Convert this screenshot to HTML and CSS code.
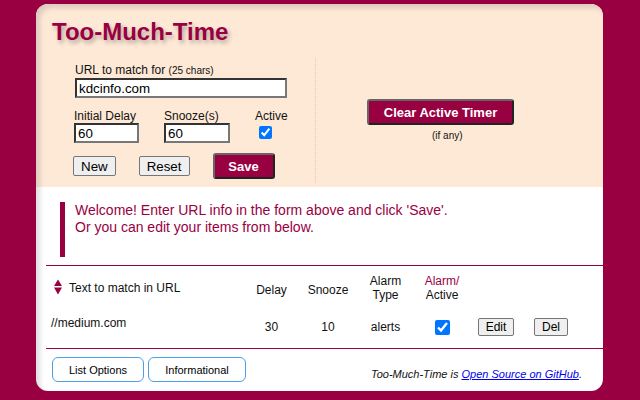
FILE: index.html
```
<!DOCTYPE html>
<html lang="en">
<head>
<meta charset="utf-8">
<title>Too-Much-Time</title>
<link rel="stylesheet" href="styles.css">
</head>
<body>
<div class="card">
  <section class="top">
    <h1 class="title">Too-Much-Time</h1>
    <div class="top-row">
      <form class="form-col">
        <label class="url-group">
          <span class="lbl">URL to match for <small>(25 chars)</small></span>
          <input class="inp url" type="text" value="kdcinfo.com">
        </label>
        <div class="row2">
          <label class="grp"><span class="lbl">Initial Delay</span><input class="inp num" type="text" value="60"></label>
          <label class="grp"><span class="lbl">Snooze(s)</span><input class="inp num snz" type="text" value="60"></label>
          <label class="grp"><span class="lbl">Active</span><input class="chk" type="checkbox" checked></label>
        </div>
        <div class="btns">
          <button type="button" class="btn">New</button>
          <button type="button" class="btn">Reset</button>
          <button type="button" class="btn-primary save">Save</button>
        </div>
      </form>
      <div class="clear-col">
        <button type="button" class="btn-primary clear">Clear Active Timer</button>
        <div class="note">(if any)</div>
      </div>
    </div>
  </section>
  <section class="bottom">
    <div class="welcome">
      Welcome! Enter URL info in the form above and click 'Save'.<br>
      Or you can edit your items from below.
    </div>
    <div class="rule"></div>
    <div class="grid head">
      <div class="c1 hc1">
        <svg class="sort" width="8" height="16" viewBox="0 0 8 16"><polygon points="4,0.5 8,7 0,7" fill="#990042"/><polygon points="0,8.5 8,8.5 4,15.5" fill="#990042"/></svg>
        <span>Text to match in URL</span>
      </div>
      <div class="low">Delay</div>
      <div class="low">Snooze</div>
      <div>Alarm<br>Type</div>
      <div><span class="accent">Alarm/</span><br>Active</div>
      <div></div>
      <div></div>
    </div>
    <div class="grid row">
      <div class="c1 url-cell">//medium.com</div>
      <div>30</div>
      <div>10</div>
      <div>alerts</div>
      <div class="cc"><input class="chk2" type="checkbox" checked></div>
      <div class="cc"><button type="button" class="sbtn">Edit</button></div>
      <div class="cc"><button type="button" class="sbtn">Del</button></div>
    </div>
    <div class="rule tight"></div>
    <div class="footer">
      <button type="button" class="obtn w1">List Options</button>
      <button type="button" class="obtn w2">Informational</button>
      <p class="credit">Too-Much-Time is <a href="#">Open Source on GitHub</a>.</p>
    </div>
  </section>
</div>
</body>
</html>
```

FILE: styles.css
```
html, body {
  margin: 0;
  padding: 0;
}
body {
  background: #990042;
  font-family: "Liberation Sans", Arial, sans-serif;
  color: #111;
  width: 640px;
  height: 400px;
  overflow: hidden;
}
.card {
  position: relative;
  margin: 4px 0 0 36px;
  width: 567px;
  height: 387px;
  border-radius: 12px;
  overflow: hidden;
  background: #fff;
}
.card::after {
  content: "";
  position: absolute;
  inset: 0;
  border-radius: 12px;
  box-shadow: inset 4px 4px 5px rgba(0, 0, 0, 0.13);
  pointer-events: none;
}
.top {
  background: #fee9d7;
  box-sizing: border-box;
  height: 183px;
  padding: 14px 0 4px 16px;
}
.title {
  margin: 0 0 12px;
  font-size: 24px;
  line-height: 28px;
  font-weight: bold;
  color: #990042;
  text-shadow: 2px 3px 4px rgba(0, 0, 0, 0.3);
}
.top-row {
  display: flex;
  height: 125px;
}
.form-col {
  margin: 0 0 0 22px;
  width: 242px;
  box-sizing: border-box;
  padding-top: 5px;
  border-right: 1px dotted #f3c7a6;
}
.url-group {
  display: block;
  padding-left: 1px;
}
.lbl {
  display: block;
  font-size: 12px;
  line-height: 14px;
  color: #111;
}
.lbl small {
  font-size: 10px;
}
.inp {
  display: block;
  margin: 0;
  box-sizing: border-box;
  height: 20px;
  padding: 1px 2px;
  font-family: "Liberation Sans", Arial, sans-serif;
  font-size: 13.333px;
  color: #000;
  background: #fff;
  border: 2px solid;
  border-color: #333 #777 #777 #333;
  outline: none;
}
.url {
  width: 212px;
}
.num {
  width: 65px;
}
.snz {
  width: 66px;
}
.row2 {
  display: grid;
  grid-template-columns: 90px 91px auto;
  margin-top: 11px;
}
.chk {
  display: block;
  margin: 3px 0 0 4px;
  width: 13px;
  height: 13px;
}
.btns {
  display: flex;
  align-items: center;
  gap: 23px;
  margin: 10px 0 0 -1px;
}
.btn {
  height: 20px;
  padding: 0 7px;
  font-family: "Liberation Sans", Arial, sans-serif;
  font-size: 13.333px;
  color: #000;
  background: #efefef;
  border: 1px solid #767676;
  border-radius: 2px;
}
.btn-primary {
  height: 26px;
  padding: 0;
  font-family: "Liberation Sans", Arial, sans-serif;
  font-size: 13px;
  font-weight: bold;
  color: #fff;
  background: #990042;
  border: 2px solid;
  border-color: #666 #222 #222 #666;
  border-radius: 3px;
}
.save {
  width: 62px;
}
.clear {
  width: 147px;
}
.clear-col {
  display: flex;
  flex-direction: column;
  align-items: flex-start;
  padding: 41px 0 0 51px;
}
.note {
  font-size: 10px;
  line-height: 12px;
  margin: 5px 0 0 65px;
  color: #111;
}
.bottom {
  padding-left: 10px;
}
.welcome {
  margin: 15px 0 0 14px;
  border-left: 5px solid #990042;
  padding: 0 0 21px 10px;
  font-size: 14px;
  line-height: 17px;
  color: #990042;
}
.rule {
  height: 1px;
  background: #990042;
  margin-top: 8px;
}
.rule.tight {
  margin-top: 0;
}
.grid {
  display: grid;
  grid-template-columns: 199px 53px 60px 55px 58px 50px 60px;
  align-items: center;
  text-align: center;
  font-size: 12px;
  line-height: 14px;
  color: #111;
}
.head {
  padding-top: 8px;
}
.c1 {
  text-align: left;
}
.hc1 {
  display: flex;
  align-items: center;
  padding-left: 8px;
}
.sort {
  display: block;
  margin: 0 7px 3px 0;
}
.low {
  padding-top: 4px;
}
.accent {
  color: #990042;
}
.row {
  padding: 16px 0 12px;
}
.url-cell {
  align-self: start;
  margin-top: -2px;
  padding-left: 5px;
}
.cc {
  display: flex;
  justify-content: center;
  align-items: center;
}
.chk2 {
  display: block;
  margin: 0;
  width: 15px;
  height: 15px;
}
.sbtn {
  height: 18px;
  padding: 0 7px;
  font-family: "Liberation Sans", Arial, sans-serif;
  font-size: 12px;
  color: #000;
  background: #efefef;
  border: 1px solid #767676;
  border-radius: 2px;
}
.footer {
  display: flex;
  align-items: flex-end;
  gap: 4px;
  margin-top: 8px;
  padding-left: 6px;
}
.obtn {
  height: 25px;
  padding: 0;
  font-family: "Liberation Sans", Arial, sans-serif;
  font-size: 11px;
  color: #000;
  background: #fff;
  border: 1px solid #4b9fe6;
  border-radius: 6px;
}
.w1 {
  width: 92px;
}
.w2 {
  width: 98px;
}
.credit {
  margin: 0 21px 1px auto;
  font-size: 11px;
  line-height: 13px;
  font-style: italic;
  color: #111;
}
.credit a {
  color: #0000ee;
  text-decoration: underline;
}
```
